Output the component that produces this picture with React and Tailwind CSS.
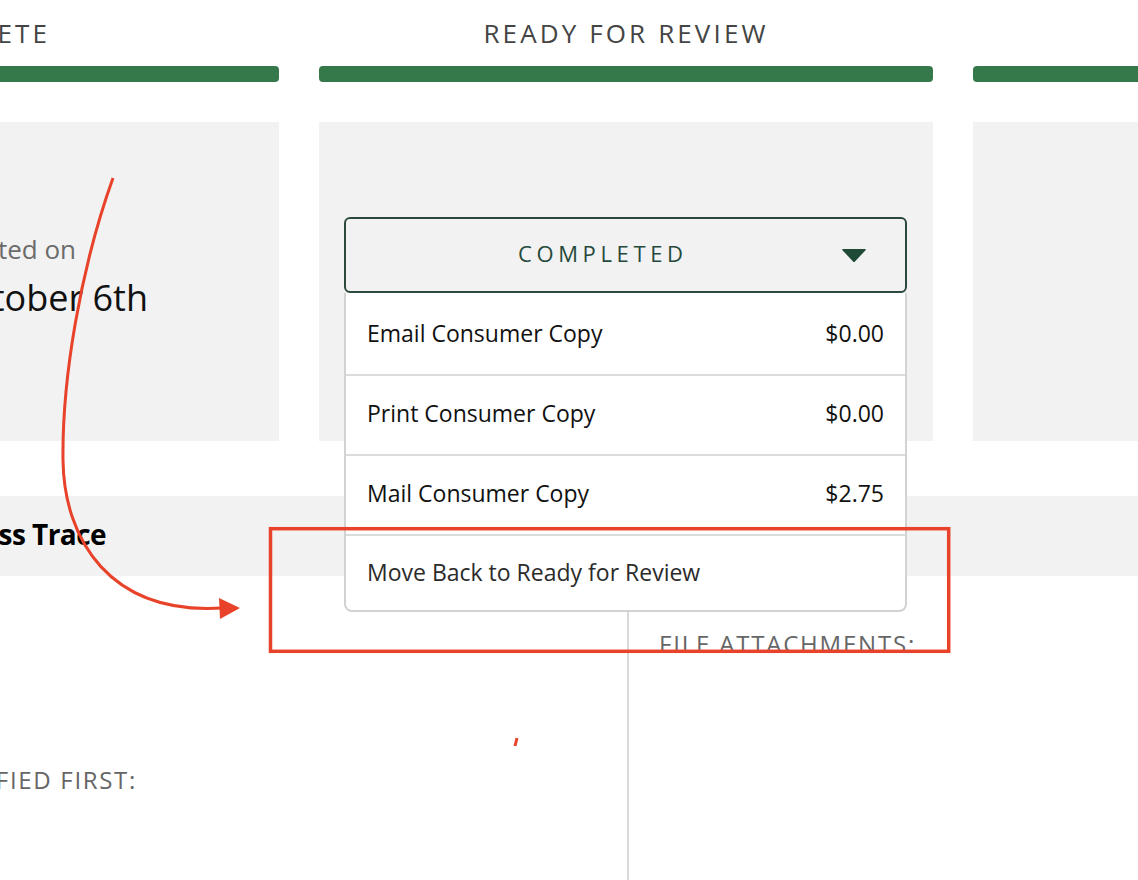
import React from "react";

const green = "bg-[#35784a]";

function Column({ title, titleRight, children }) {
  return (
    <div className="w-[614px] shrink-0 flex flex-col">
      <div className={`h-[66px] flex items-center ${titleRight ? "justify-end pr-[229px]" : "justify-center"}`}>
        <span className="text-[26px] leading-none tracking-[0.12em] text-[#444] whitespace-nowrap">{title}</span>
      </div>
      <div className={`h-4 rounded-[4px] ${green}`} />
      <div className="mt-10 h-[319px] bg-[#f2f2f2]">{children}</div>
    </div>
  );
}

function MenuRow({ label, price, h, last }) {
  return (
    <div
      className={`flex items-start justify-between px-[21px] ${h} ${
        last ? "text-[#2b2b2b]" : "border-b-2 border-[#dcdcdc] text-[#111]"
      } text-[23px] leading-[30px]`}
    >
      <span>{label}</span>
      {price && <span>{price}</span>}
    </div>
  );
}

export default function App() {
  return (
    <div className="relative w-[1138px] h-[880px] overflow-hidden bg-white font-['Open_Sans','Noto_Sans',sans-serif]">
      {/* Kanban columns */}
      <div className="flex gap-10 ml-[-335px]">
        <Column title="INCOMPLETE" titleRight>
          <div className="pt-[112px]">
            <div className="w-[411px] flex justify-end whitespace-nowrap text-[26px] leading-[30px] text-[#6b6b6b]">
              Completed on
            </div>
            <div className="mt-[12px] w-[483px] flex justify-end whitespace-nowrap text-[36px] leading-[44px] text-[#111]">
              October 6th
            </div>
          </div>
        </Column>
        <Column title="READY FOR REVIEW">
          <div className="pt-[95px] pl-[25px]">
            <div className="relative w-[563px] z-10">
              <div className="h-[76px] border-2 border-[#2a4b3b] rounded-[6px] flex items-center justify-center relative pr-[50px]">
                <span className="text-[22px] tracking-[0.21em] text-[#24493a] pl-[0.21em] -mt-[4px]">COMPLETED</span>
                <svg className="absolute right-[38px] top-[29px]" width="26" height="15" viewBox="0 0 26 15">
                  <path d="M2 1 L24 1 Q25.5 1 24.5 2.2 L14 13.5 Q13 14.5 12 13.5 L1.5 2.2 Q0.5 1 2 1 Z" fill="#1f4a36" />
                </svg>
              </div>
              <div className="absolute top-full left-0 right-0 bg-white border-2 border-t-0 border-[#d2d2d2] rounded-b-[8px]">
                <MenuRow label="Email Consumer Copy" price="$0.00" h="h-[83px] pt-[25px]" />
                <MenuRow label="Print Consumer Copy" price="$0.00" h="h-[80px] pt-[22px]" />
                <MenuRow label="Mail Consumer Copy" price="$2.75" h="h-[80px] pt-[22px]" />
                <MenuRow label="Move Back to Ready for Review" h="h-[74px] pt-[21px]" last />
              </div>
            </div>
          </div>
        </Column>
        <Column title="COMPLETED" />
      </div>

      {/* Section band */}
      <div className="mt-[55px] h-[80px] bg-[#f2f2f2] flex items-center">
        <div className="w-[106px] -mt-[5px] flex justify-end whitespace-nowrap text-[28px] font-bold text-black tracking-[-0.02em]">
          Address Trace
        </div>
      </div>

      {/* Details */}
      <div className="flex h-[304px]">
        <div className="w-[627px] pt-[189px]">
          <div className="w-[137px] flex justify-end whitespace-nowrap text-[24px] leading-[30px] tracking-[0.07em] text-[#666]">
            VERIFIED FIRST:
          </div>
        </div>
        <div className="w-[2px] bg-[#d9d9d9]" />
        <div className="pl-[30px] pt-[53px]">
          <div className="text-[24px] leading-[30px] tracking-[0.075em] text-[#666] whitespace-nowrap">
            FILE ATTACHMENTS:
          </div>
        </div>
      </div>

      {/* Annotation overlay */}
      <svg className="absolute inset-0 pointer-events-none z-20" width="1138" height="880" viewBox="0 0 1138 880">
        <path
          d="M113,178 C80,270 62,380 63,460 C64,540 110,615 222,608"
          fill="none"
          stroke="#e8432a"
          strokeWidth="3"
        />
        <polygon points="240,608 219,598 220,619" fill="#e8432a" />
        <rect x="270.5" y="528.7" width="678.2" height="122.6" fill="none" stroke="#e8432a" strokeWidth="3.5" />
        <line x1="517" y1="738" x2="515" y2="746" stroke="#e8432a" strokeWidth="3" />
      </svg>
    </div>
  );
}
